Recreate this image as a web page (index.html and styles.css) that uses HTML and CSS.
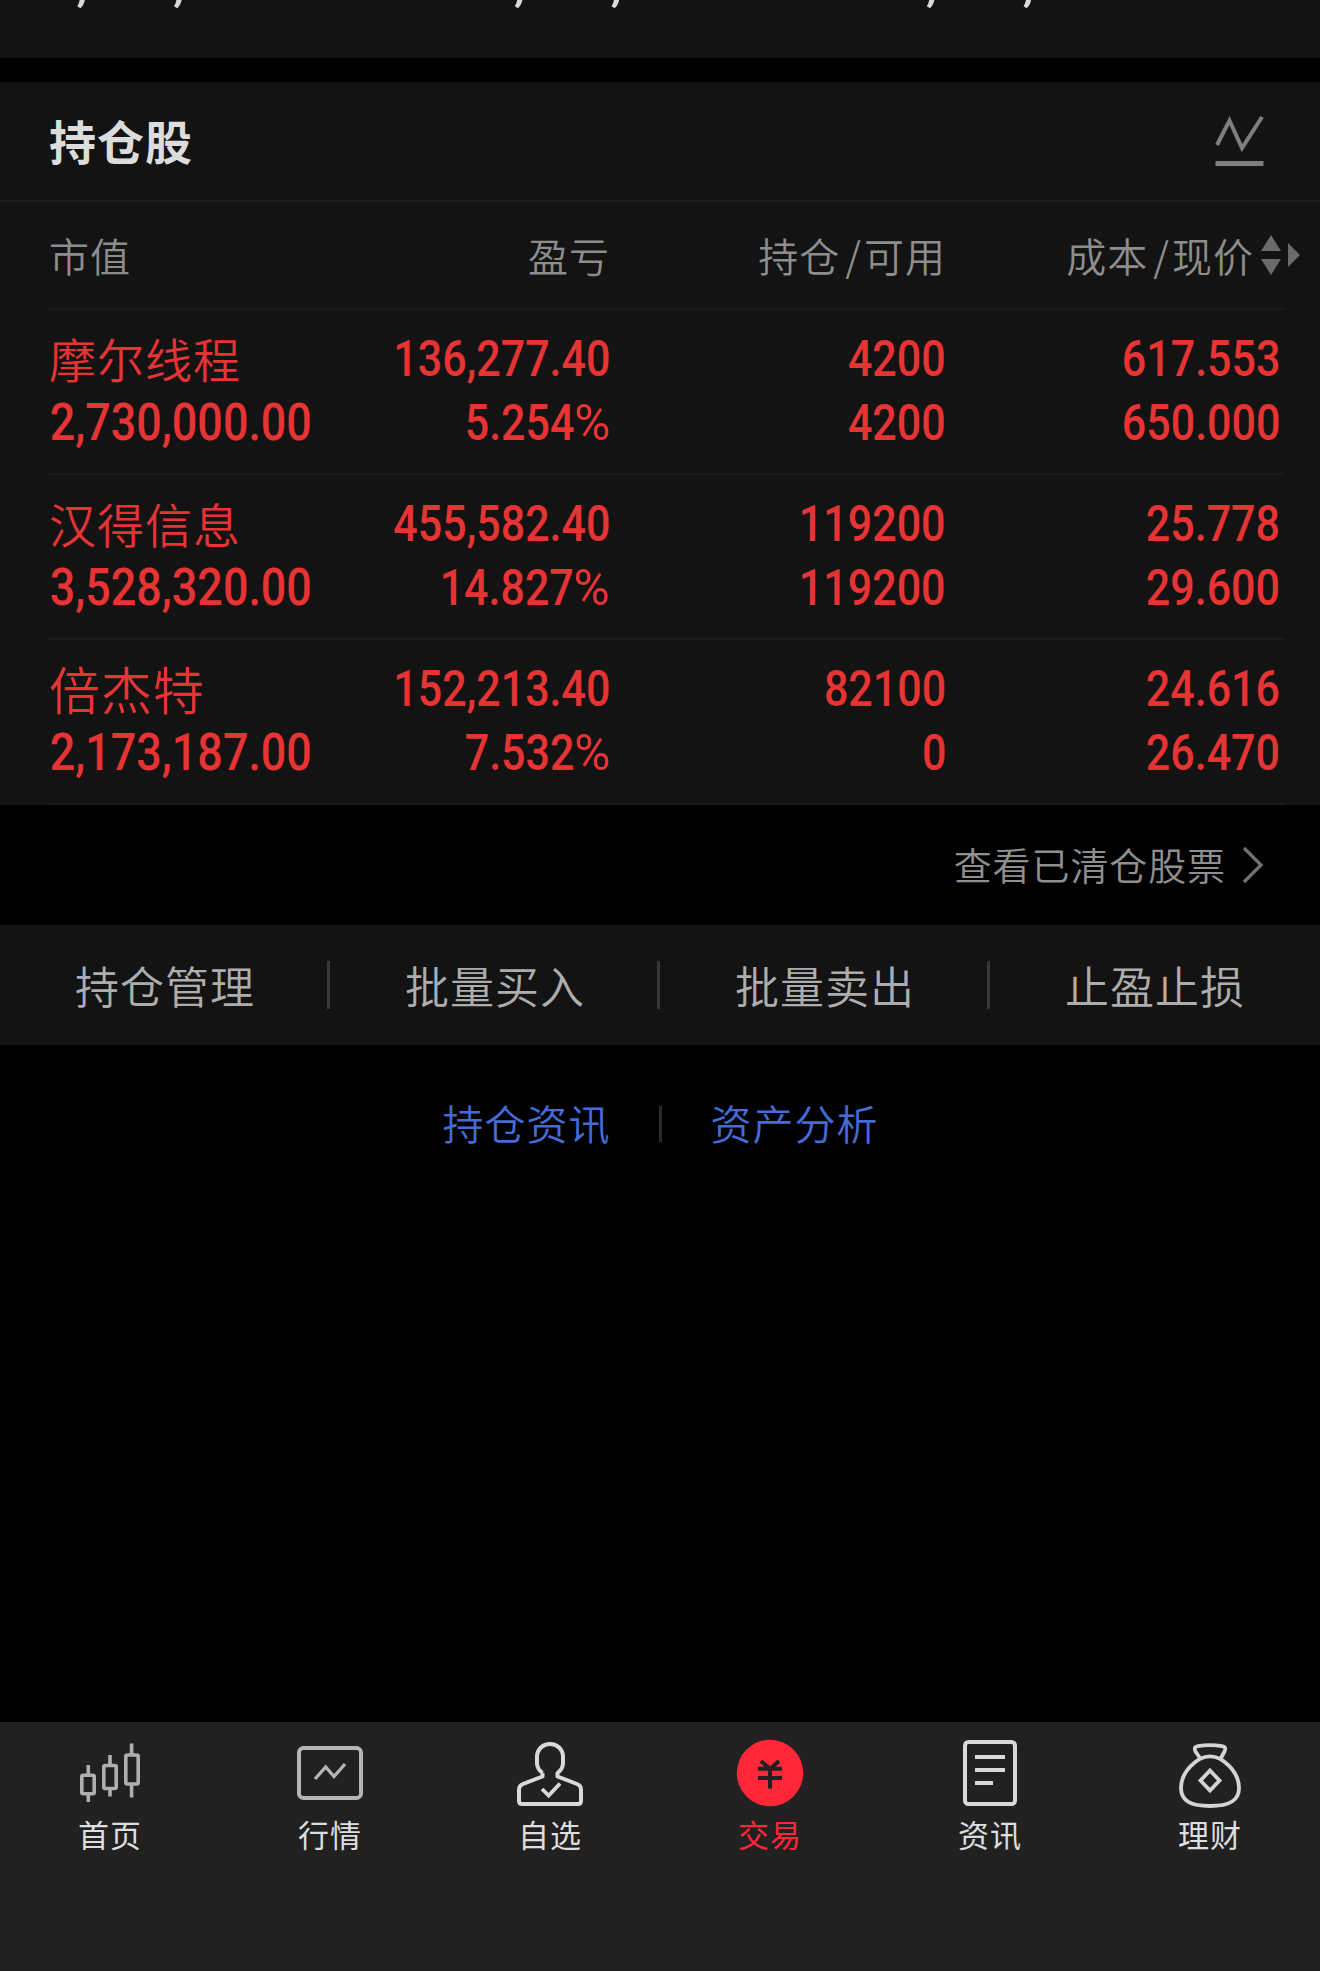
FILE: index.html
```html
<!DOCTYPE html>
<html lang="zh-CN">
<head>
<meta charset="utf-8">
<title>持仓股</title>
<link rel="stylesheet" href="styles.css">
</head>
<body>
<div class="app">
  <section class="summary">
    <div class="summary-row">
      <span class="sum">8,484,001.00</span>
      <span class="sum">60,000,000</span>
      <span class="sum">60,000,000</span>
    </div>
  </section>

  <section class="holdings">
    <header class="holdings-head">
      <h1>持仓股</h1>
      <svg class="chart-icon" width="50" height="52" viewBox="0 0 50 52" fill="none" stroke="#7e7e7e">
        <path d="M3 30 L15.500 5.500 L28 33 L48 2" stroke-width="4"/>
        <path d="M1.500 48.500 H49.500" stroke-width="4.800"/>
      </svg>
    </header>

    <div class="row cols">
      <span>市值</span>
      <span class="r">盈亏</span>
      <span class="r">持仓<b>/</b>可用</span>
      <span class="r sortable"><span>成本<b>/</b>现价</span>
        <svg width="42" height="40" viewBox="0 0 42 40" fill="#6b6b6b">
          <path d="M12 0 L22 16 H2 Z M2 24 H22 L12 40 Z M29 8 L41 20 L29 32 Z"/>
        </svg>
      </span>
    </div>

    <div class="row stock">
      <div class="cell"><span class="name">摩尔线程</span><span class="num wide">2,730,000.00</span></div>
      <div class="cell r"><span class="num">136,277.40</span><span class="num">5.254<i>%</i></span></div>
      <div class="cell r"><span class="num">4200</span><span class="num">4200</span></div>
      <div class="cell r"><span class="num">617.553</span><span class="num">650.000</span></div>
    </div>
    <div class="row stock">
      <div class="cell"><span class="name">汉得信息</span><span class="num wide">3,528,320.00</span></div>
      <div class="cell r"><span class="num">455,582.40</span><span class="num">14.827<i>%</i></span></div>
      <div class="cell r"><span class="num">119200</span><span class="num">119200</span></div>
      <div class="cell r"><span class="num">25.778</span><span class="num">29.600</span></div>
    </div>
    <div class="row stock">
      <div class="cell"><span class="name large">倍杰特</span><span class="num wide">2,173,187.00</span></div>
      <div class="cell r"><span class="num">152,213.40</span><span class="num">7.532<i>%</i></span></div>
      <div class="cell r"><span class="num">82100</span><span class="num">0</span></div>
      <div class="cell r"><span class="num">24.616</span><span class="num">26.470</span></div>
    </div>
  </section>

  <a class="cleared">
    <span>查看已清仓股票</span>
    <svg width="22" height="38" viewBox="0 0 22 38" fill="none" stroke="#727272" stroke-width="3.200"><path d="M2 2 L19 19 L2 36"/></svg>
  </a>

  <nav class="actions">
    <a>持仓管理</a><a>批量买入</a><a>批量卖出</a><a>止盈止损</a>
  </nav>

  <div class="links">
    <a>持仓资讯</a><i class="bar"></i><a>资产分析</a>
  </div>

  <nav class="tabs">
    <a class="tab">
      <svg width="72" height="72" viewBox="0 0 72 72" fill="none" stroke="#afafaf" stroke-width="3.600">
        <rect x="7.800" y="38.300" width="12.400" height="18.500" rx="1.500"/><path d="M14.300 28V38M14.300 57V65"/>
        <rect x="29.800" y="28.500" width="12.400" height="23" rx="1.500"/><path d="M36 18V28M36 52V59.500"/>
        <rect x="51.800" y="18" width="12.400" height="29" rx="1.500"/><path d="M57.600 6.500V18M57.600 47V60.500"/>
      </svg>
      <span>首页</span>
    </a>
    <a class="tab">
      <svg width="72" height="72" viewBox="0 0 72 72" fill="none" stroke="#b5b5b5" stroke-width="4">
        <rect x="5" y="11" width="62" height="50" rx="4.500"/>
        <path d="M21 42 L31.700 30 L40 39.500 L51 27" stroke-width="3.300"/>
      </svg>
      <span>行情</span>
    </a>
    <a class="tab">
      <svg width="72" height="72" viewBox="0 0 72 72" fill="none" stroke="#d9d9d9" stroke-width="4" stroke-linejoin="round">
        <path d="M28.500 36 V39.500 L9 47 Q5 48.500 5 52.500 V64 Q5 67 8 67 H64 Q67 67 67 64 V52.500 Q67 48.500 63 47 L43.500 39.500 V36 Q49 32 49 26 V20 C49 12 43 7 36 7 S23 12 23 20 V26 Q23 32 28.500 36"/>
        <path d="M28 52 L34.700 58.500 L46 46.500" stroke-width="3.800" stroke-linejoin="miter"/>
      </svg>
      <span>自选</span>
    </a>
    <a class="tab active">
      <svg width="72" height="72" viewBox="0 0 72 72" fill="none" stroke="#212121" stroke-width="4">
        <circle cx="36" cy="36" r="33.200" fill="#ff2738" stroke="none"/>
        <path d="M27 24 L36 32 L45 24 M24 31.700 H48 M24 41 H48 M36 31 V51.500"/>
      </svg>
      <span>交易</span>
    </a>
    <a class="tab">
      <svg width="72" height="72" viewBox="0 0 72 72" fill="none" stroke="#d9d9d9" stroke-width="4">
        <rect x="11" y="5" width="50" height="62" rx="3.500"/>
        <path d="M21 20 H51 M21 33 H51 M21 46 H39"/>
      </svg>
      <span>资讯</span>
    </a>
    <a class="tab">
      <svg width="72" height="72" viewBox="0 0 72 72" fill="none" stroke="#d4d4d4" stroke-width="3.800" stroke-linejoin="round">
        <path d="M36 19.300 C49 19.300 65 35 65 51 C65 64 55 69 36 69 S7 64 7 51 C7 35 23 19.300 36 19.300 Z"/>
        <path d="M26 21 L21.500 14.500 Q19 10 24 9.200 Q36 7.200 48 9.200 Q53 10 50.500 14.500 L47 21"/>
        <path d="M36 33.500 L45.500 43.500 L36 53.500 L26.500 43.500 Z" stroke-linejoin="miter"/>
      </svg>
      <span>理财</span>
    </a>
  </nav>
</div>
</body>
</html>
```
FILE: styles.css
```css
* { box-sizing: border-box; }

body {
  margin: 0;
  background: #000;
  font-family: "Noto Sans CJK SC", sans-serif;
}

.app {
  width: 1320px;
  height: 1971px;
  display: flex;
  flex-direction: column;
  overflow: hidden;
}

/* account totals, scrolled mostly out of view */
.summary {
  height: 58px;
  flex: none;
  overflow: hidden;
  background: #131313;
  padding-left: 48px;
}
.summary-row {
  display: grid;
  grid-template-columns: 409px 412px 400px;
  margin-top: -51px;
}
.sum {
  font: 500 56px/64px Roboto, sans-serif;
  color: #d8d8d8;
  transform: translateY(-.7px) scaleX(.895);
  transform-origin: left;
  white-space: nowrap;
}

.holdings {
  margin-top: 24px;
  background: #131313;
}
.holdings-head {
  height: 120px;
  padding: 0 56px 4px 49px;
  display: flex;
  align-items: center;
  justify-content: space-between;
  border-bottom: 2px solid #1b1b1b;
}
.chart-icon {
  margin-top: 4px;
  overflow: visible;
}
h1 {
  margin: 0;
  font-size: 47px;
  font-weight: 700;
  letter-spacing: 1px;
  color: #dcdcdc;
}

.row {
  display: grid;
  grid-template-columns: 270px 292px 336px 334px;
  margin: 0 36px 0 48px;
}
.row::after {
  content: "";
  grid-column: 1 / -1;
  align-self: end;
  height: 2px;
  margin-right: -4px;
  background: #1a1a1a;
}
.r { text-align: right; }

.cols {
  height: 108px;
  grid-template-rows: 106px 2px;
  align-items: center;
  font-size: 40px;
  letter-spacing: 1px;
  font-weight: 350;
  color: #8d8d8d;
}
.cols > :first-child { padding-left: 1px; }
.cols b { font-weight: inherit; margin: 0 2px 0 5px; }
.sortable {
  display: flex;
  align-items: center;
  justify-content: flex-end;
  white-space: nowrap;
  gap: 5px;
  margin-right: -21px;
}

.stock {
  height: 165px;
  grid-template-rows: 163px 2px;
  color: #e63333;
}
.cell {
  display: flex;
  flex-direction: column;
  align-items: flex-start;
  padding-top: 17px;
}
.cell.r { align-items: flex-end; }
.name {
  font-size: 47px;
  line-height: 64px;
  letter-spacing: 1px;
  font-weight: 350;
  padding-left: 1px;
  margin: -1px 0 1px;
}
.name.large { font-size: 51px; }
.num {
  font: 500 50px/64px Roboto, sans-serif;
  transform: scaleX(.86);
  transform-origin: right;
  white-space: nowrap;
}
.num i {
  display: inline-block;
  font-style: normal;
  font-weight: 400;
  margin-left: 5px;
  transform: scaleX(1.15);
  transform-origin: right;
}
.num.wide {
  font-size: 51px;
  transform: scaleX(.88);
  transform-origin: left;
  padding-left: 2px;
}

.cleared {
  height: 120px;
  flex: none;
  display: flex;
  align-items: center;
  justify-content: flex-end;
  gap: 16px;
  padding: 0 56px 0 0;
  font-size: 38px;
  letter-spacing: .9px;
  font-weight: 350;
  color: #8f8f8f;
}
.cleared span { margin-top: -4px; }

.actions {
  height: 120px;
  flex: none;
  display: grid;
  grid-template-columns: repeat(4, 330px);
  align-items: center;
  background: #131313;
}
.actions a {
  display: flex;
  align-items: center;
  justify-content: center;
  height: 48px;
  padding: 0 0 1px 3px;
  font-size: 44px;
  letter-spacing: 1px;
  font-weight: 350;
  color: #adadad;
  border-right: 3px solid #383838;
}
.actions a:last-child { border-right-color: transparent; }

.links {
  display: flex;
  align-items: center;
  justify-content: center;
  padding: 48px 0 0 1px;
  height: 110px;
  font-size: 41px;
  letter-spacing: 1px;
  font-weight: 350;
  color: #466bd6;
}
.links a { margin-top: -5px; }
.bar {
  width: 3px;
  height: 36px;
  margin: 0 49px 0 48px;
  background: #2b2b2b;
}

.tabs {
  margin-top: auto;
  height: 249px;
  flex: none;
  display: grid;
  grid-template-columns: repeat(6, 220px);
  background: #212121;
}
.tab {
  display: flex;
  flex-direction: column;
  align-items: center;
  padding-top: 15px;
  color: #dedede;
}
.tab span {
  font-size: 31px;
  line-height: 44px;
  letter-spacing: 1px;
  margin-top: 3px;
}
.tab.active { color: #ff2738; }
```
